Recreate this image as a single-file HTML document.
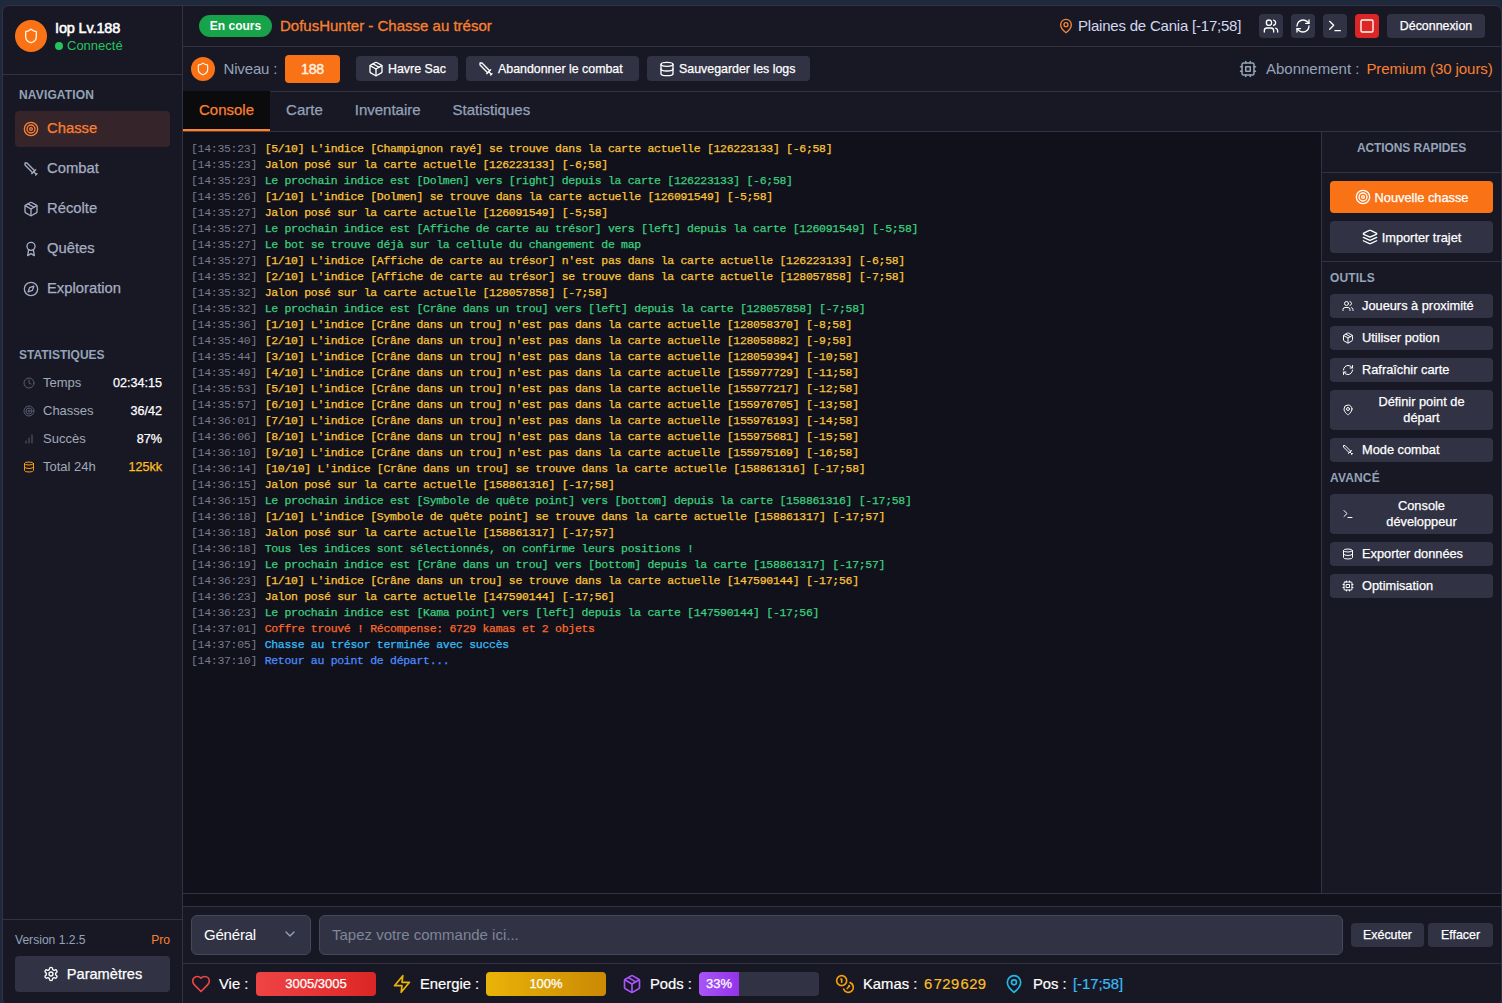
<!DOCTYPE html>
<html lang="fr">
<head>
<meta charset="utf-8">
<title>DofusHunter - Chasse au trésor</title>
<style>
*{box-sizing:border-box;margin:0;padding:0}
html,body{width:1502px;height:1003px;overflow:hidden;background:#1e293b;font-family:"Liberation Sans",Arial,sans-serif;color:#fff}
svg{display:block;fill:none;stroke:currentColor;stroke-width:2;stroke-linecap:round;stroke-linejoin:round;flex:none}
.win{position:absolute;left:2px;top:5px;width:1500px;height:1001px;border:1px solid #313244;border-radius:7px;background:#181825;overflow:hidden}
.abs{position:absolute}
/* sidebar */
.side{position:absolute;left:0;top:0;width:180px;height:998px;border-right:1px solid #313244}
.prof{position:absolute;left:0;top:0;width:179px;height:69px;border-bottom:1px solid #313244}
.ava{position:absolute;left:12px;top:14px;width:32px;height:32px;border-radius:50%;background:#f97316;color:#fff7e6;display:flex;align-items:center;justify-content:center}
.pname{position:absolute;left:52px;top:13px;font-size:14.5px;font-weight:400;-webkit-text-stroke:.55px currentColor;line-height:18px;letter-spacing:-.15px;white-space:nowrap}
.pstat{position:absolute;left:52px;top:32px;font-size:13px;line-height:16px;color:#22c55e;white-space:nowrap;display:flex;align-items:center}
.pstat i{width:8px;height:8px;border-radius:50%;background:#22c55e;margin-right:4px;display:block}
.lbl{position:absolute;font-size:12px;font-weight:700;color:#94a3b8;line-height:14px;white-space:nowrap;letter-spacing:.15px}
.nav{position:absolute;left:12px;width:155px;height:36px;border-radius:4px;display:flex;align-items:center;padding-left:8px;font-size:14.8px;color:#a6adc0;white-space:nowrap}
.nav svg{width:16px;height:16px;margin-right:8px}
.nav span{position:relative;top:-1px;-webkit-text-stroke:.25px currentColor}
.nav.on{background:#35252b;color:#fa8030}
.st{position:absolute;left:12px;width:155px;height:28px;display:flex;align-items:center;padding:0 8px;font-size:13px;color:#a1a9b8;white-space:nowrap}
.st svg{width:12px;height:12px;margin-right:8px;color:#585b70}
.st span{position:relative;top:-1px}
.st b{position:relative;top:-.3px}
.st b{margin-left:auto;color:#fff;font-weight:400;font-size:12.6px;-webkit-text-stroke:.25px currentColor}
.sfoot{position:absolute;left:0;top:913px;width:179px;height:90px;border-top:1px solid #313244}
.btn{background:#313244;border-radius:4px;color:#fff;display:flex;align-items:center;white-space:nowrap}
/* main */
.top{position:absolute;left:180px;top:0;width:1318px;height:41px;border-bottom:1px solid #313244}
.tool{position:absolute;left:180px;top:41px;width:1318px;height:45px;border-bottom:1px solid #313244}
.tabs{position:absolute;left:180px;top:85px;width:1318px;height:41px;border-bottom:1px solid #313244;display:flex}
.tab{height:40px;padding:0 16px;font-size:15px;color:#94a3b8;line-height:38px;white-space:nowrap;-webkit-text-stroke:.25px currentColor}
.tab.on{background:#0b0a0c;color:#fa8030;border-bottom:2px solid #f5853a;height:40px;box-shadow:0 1px 0 #6b3a1c}
.cons{position:absolute;left:180px;top:126px;width:1139px;height:761px;background:#11111b;border-right:1px solid #313244;font-family:"Liberation Mono","DejaVu Sans Mono",monospace;font-size:11.5px;letter-spacing:-.3px;line-height:16px;padding:9px 0 0 9px;white-space:pre;color:#6b7280}
.cons div{height:16px}
.cons span{-webkit-text-stroke:.25px currentColor}
.cons i{font-style:normal;position:relative;left:-1px;color:#777b8c}
.y{color:#fcc53a}.g{color:#3bd07f}.r{color:#fb6a2c}.c{color:#38bdf8}.b{color:#4c8dff}
.right{position:absolute;left:1319px;top:126px;width:179px;height:761px}
.band{position:absolute;left:180px;top:887px;width:1318px;height:14px;background:#11111b;border-top:1px solid #313244;border-bottom:1px solid #313244}
.cmd{position:absolute;left:180px;top:901px;width:1318px;height:57px;border-bottom:1px solid #313244}
.stat{position:absolute;left:180px;top:958px;width:1318px;height:40px;font-size:15px;white-space:nowrap}
.ver{font-size:12.1px;line-height:14px;color:#94a3b8;white-space:nowrap}
.param{font-size:14.6px;-webkit-text-stroke:.25px currentColor;padding-bottom:1px}
.pill{background:#16a34a;border-radius:11px;font-size:12px;font-weight:700;line-height:22px;text-align:center;color:#fff;white-space:nowrap}
.title{font-size:15px;line-height:18px;color:#fa8030;white-space:nowrap;-webkit-text-stroke:.3px currentColor}
.loc{display:flex;align-items:center;letter-spacing:-.21px;font-size:15px;line-height:18px;color:#d3d9ee;white-space:nowrap;height:18px}
.ib{width:24px;height:24px;justify-content:center}
.ib svg{width:16px;height:16px}
.tb{height:24px;font-size:12.4px;-webkit-text-stroke:.25px currentColor}
.tool .tb{height:25px}
.ava2{width:24px;height:24px;border-radius:50%;background:#f97316;color:#fff7e6;display:flex;align-items:center;justify-content:center}
.niv{letter-spacing:-.15px;font-size:15px;line-height:18px;color:#94a3b8;white-space:nowrap}
.badge{width:55px;height:28px;border-radius:4px;background:#f97316;font-size:14.2px;letter-spacing:-.3px;-webkit-text-stroke:.35px currentColor;color:#fff5e6;line-height:28px;text-align:center}
.abo{display:flex;align-items:center;font-size:15px;line-height:18px;color:#94a3b8;white-space:nowrap;height:18px}
.rhead{position:absolute;left:0;top:0;width:179px;height:41px;border-bottom:1px solid #313244;text-align:center;letter-spacing:-.1px;font-size:12px;font-weight:700;color:#94a3b8;line-height:32px;white-space:nowrap}
.rb{width:163px;height:32px;border-radius:4px;background:#313244;display:flex;align-items:center;justify-content:center;font-size:12.8px;-webkit-text-stroke:.25px currentColor;white-space:nowrap}
.tl{left:8px;width:163px;border-radius:4px;background:#313244;display:flex;align-items:center;padding:0 12px;font-size:12.8px;-webkit-text-stroke:.25px currentColor;line-height:16px}
.tl svg{width:12px;height:12px;margin-right:8px}
.tl span.c2{flex:1;text-align:center}
.tl br+*{}
.sel{letter-spacing:-.2px;padding-bottom:2px!important;height:40px;border:1px solid #45475a;border-radius:6px;background:#313244;display:flex;align-items:center;padding:0 12px;font-size:15px}
.inp{height:40px;border:1px solid #45475a;border-radius:6px;background:#313244;padding:0 12px;font-size:15px;line-height:38px;color:#7f8598;white-space:nowrap}
.sic{top:10px;width:20px;height:20px}
.sic svg{width:20px;height:20px}
.stx{top:11px;line-height:18px;font-size:14.8px;-webkit-text-stroke:.2px currentColor}
.kv{letter-spacing:.4px;word-spacing:-3.5px}
.bar{top:8px;width:120px;height:24px;border-radius:4px;font-size:13px;-webkit-text-stroke:.25px currentColor;line-height:24px;text-align:center;overflow:hidden}
</style>
</head>
<body>
<div class="win">
<div class="side">
<div class="prof"><div class="ava"><svg viewBox="0 0 24 24" style="width:16px;height:16px"><path d="M20 13c0 5-3.5 7.5-7.66 8.950a1 1 0 0 1-.67-.010C7.500 20.500 4 18 4 13V6a1 1 0 0 1 1-1c2 0 4.500-1.200 6.240-2.720a1.170 1.170 0 0 1 1.520 0C14.510 3.810 17 5 19 5a1 1 0 0 1 1 1z"/></svg></div><div class="pname">Iop Lv.188</div><div class="pstat"><i></i>Connecté</div></div>
<div class="lbl" style="left:16px;top:82px">NAVIGATION</div>
<div class="nav on" style="top:105px"><svg viewBox="0 0 24 24"><circle cx="12" cy="12" r="10"/><circle cx="12" cy="12" r="6"/><circle cx="12" cy="12" r="2"/></svg><span>Chasse</span></div>
<div class="nav" style="top:145px"><svg viewBox="0 0 24 24"><path d="M14.500 17.500 3 6V3h3l11.500 11.500"/><path d="m13 19 6-6"/><path d="m16 16 4 4"/><path d="m19 21 2-2"/></svg><span>Combat</span></div>
<div class="nav" style="top:185px"><svg viewBox="0 0 24 24"><path d="m7.500 4.270 9 5.150"/><path d="M21 8a2 2 0 0 0-1-1.730l-7-4a2 2 0 0 0-2 0l-7 4A2 2 0 0 0 3 8v8a2 2 0 0 0 1 1.730l7 4a2 2 0 0 0 2 0l7-4A2 2 0 0 0 21 16Z"/><path d="m3.300 7 8.700 5 8.700-5"/><path d="M12 22V12"/></svg><span>Récolte</span></div>
<div class="nav" style="top:225px"><svg viewBox="0 0 24 24"><circle cx="12" cy="8" r="6"/><path d="M15.477 12.890 17 22l-5-3-5 3 1.523-9.110"/></svg><span>Quêtes</span></div>
<div class="nav" style="top:265px"><svg viewBox="0 0 24 24"><circle cx="12" cy="12" r="10"/><path d="m16.240 7.760-2.120 6.360-6.360 2.120 2.120-6.360 6.360-2.120z"/></svg><span>Exploration</span></div>
<div class="lbl" style="left:16px;top:342px;letter-spacing:0">STATISTIQUES</div>
<div class="st" style="top:363px"><svg viewBox="0 0 24 24"><circle cx="12" cy="12" r="10"/><path d="M12 6v6l4 2"/></svg><span>Temps</span><b>02:34:15</b></div>
<div class="st" style="top:391px"><svg viewBox="0 0 24 24"><circle cx="12" cy="12" r="10"/><circle cx="12" cy="12" r="6"/><circle cx="12" cy="12" r="2"/></svg><span>Chasses</span><b>36/42</b></div>
<div class="st" style="top:419px"><svg viewBox="0 0 24 24"><path d="M12 20V10"/><path d="M18 20V4"/><path d="M6 20v-4"/></svg><span>Succès</span><b>87%</b></div>
<div class="st" style="top:447px"><svg viewBox="0 0 24 24" style="color:#f59e0b"><ellipse cx="12" cy="5" rx="9" ry="3"/><path d="M3 5v14a9 3 0 0 0 18 0V5"/><path d="M3 12a9 3 0 0 0 18 0"/></svg><span>Total 24h</span><b style="color:#fbbf24">125kk</b></div>
<div class="sfoot"><div class="abs ver" style="left:12px;top:13px">Version 1.2.5</div><div class="abs ver" style="right:12px;top:13px;color:#fa8030">Pro</div><div class="btn abs param" style="left:12px;top:36px;width:155px;height:36px;justify-content:center"><svg viewBox="0 0 24 24" style="width:16px;height:16px;margin-right:8px"><path d="M12.220 2h-.440a2 2 0 0 0-2 2v.180a2 2 0 0 1-1 1.730l-.430.250a2 2 0 0 1-2 0l-.150-.080a2 2 0 0 0-2.730.730l-.220.380a2 2 0 0 0 .730 2.730l.150.100a2 2 0 0 1 1 1.720v.510a2 2 0 0 1-1 1.740l-.150.090a2 2 0 0 0-.730 2.730l.220.380a2 2 0 0 0 2.730.730l.150-.080a2 2 0 0 1 2 0l.430.250a2 2 0 0 1 1 1.730V20a2 2 0 0 0 2 2h.440a2 2 0 0 0 2-2v-.180a2 2 0 0 1 1-1.730l.430-.250a2 2 0 0 1 2 0l.150.080a2 2 0 0 0 2.730-.730l.220-.390a2 2 0 0 0-.730-2.730l-.150-.080a2 2 0 0 1-1-1.740v-.500a2 2 0 0 1 1-1.740l.150-.090a2 2 0 0 0 .730-2.730l-.220-.380a2 2 0 0 0-2.730-.730l-.150.080a2 2 0 0 1-2 0l-.430-.250a2 2 0 0 1-1-1.730V4a2 2 0 0 0-2-2z"/><circle cx="12" cy="12" r="3"/></svg><span>Paramètres</span></div></div>
</div>
<div class="top"><div class="abs pill" style="left:16px;top:9px;width:73px;height:22px">En cours</div><div class="abs title" style="left:97px;top:11px">DofusHunter - Chasse au trésor</div><div class="abs loc" style="left:875px;top:11px"><svg viewBox="0 0 24 24" style="width:16px;height:16px;color:#f5853a;margin-right:4px"><path d="M20 10c0 6-8 12-8 12s-8-6-8-12a8 8 0 0 1 16 0Z"/><circle cx="12" cy="10" r="3"/></svg><span>Plaines de Cania [-17;58]</span></div><div class="btn abs ib" style="left:1076px;top:8px"><svg viewBox="0 0 24 24"><path d="M16 21v-2a4 4 0 0 0-4-4H6a4 4 0 0 0-4 4v2"/><circle cx="9" cy="7" r="4"/><path d="M22 21v-2a4 4 0 0 0-3-3.870"/><path d="M16 3.130a4 4 0 0 1 0 7.750"/></svg></div><div class="btn abs ib" style="left:1108px;top:8px"><svg viewBox="0 0 24 24"><path d="M3 12a9 9 0 0 1 9-9 9.750 9.750 0 0 1 6.740 2.740L21 8"/><path d="M21 3v5h-5"/><path d="M21 12a9 9 0 0 1-9 9 9.750 9.750 0 0 1-6.740-2.740L3 16"/><path d="M8 16H3v5"/></svg></div><div class="btn abs ib" style="left:1140px;top:8px"><svg viewBox="0 0 24 24"><path d="m4 17 6-6-6-6"/><path d="M12 19h8"/></svg></div><div class="btn abs ib" style="left:1172px;top:8px;background:#dc2626"><svg viewBox="0 0 24 24"><rect width="18" height="18" x="3" y="3" rx="2"/></svg></div><div class="btn abs tb" style="left:1204px;top:8px;width:98px;justify-content:center">Déconnexion</div></div>
<div class="tool"><div class="abs ava2" style="left:8px;top:10px"><svg viewBox="0 0 24 24" style="width:14px;height:14px"><path d="M20 13c0 5-3.5 7.5-7.66 8.950a1 1 0 0 1-.67-.010C7.500 20.500 4 18 4 13V6a1 1 0 0 1 1-1c2 0 4.500-1.200 6.240-2.720a1.170 1.170 0 0 1 1.520 0C14.510 3.810 17 5 19 5a1 1 0 0 1 1 1z"/></svg></div><div class="abs niv" style="left:40.5px;top:13px">Niveau :</div><div class="abs badge" style="left:102px;top:8px">188</div><div class="btn abs tb" style="left:173px;top:9px;width:102px;padding-left:12px"><svg viewBox="0 0 24 24" style="width:16px;height:16px;margin-right:4px"><path d="m7.500 4.270 9 5.150"/><path d="M21 8a2 2 0 0 0-1-1.730l-7-4a2 2 0 0 0-2 0l-7 4A2 2 0 0 0 3 8v8a2 2 0 0 0 1 1.730l7 4a2 2 0 0 0 2 0l7-4A2 2 0 0 0 21 16Z"/><path d="m3.300 7 8.700 5 8.700-5"/><path d="M12 22V12"/></svg><span>Havre Sac</span></div><div class="btn abs tb" style="left:283px;top:9px;width:173px;padding-left:12px"><svg viewBox="0 0 24 24" style="width:16px;height:16px;margin-right:4px"><path d="M14.500 17.500 3 6V3h3l11.500 11.500"/><path d="m13 19 6-6"/><path d="m16 16 4 4"/><path d="m19 21 2-2"/></svg><span>Abandonner le combat</span></div><div class="btn abs tb" style="left:464px;top:9px;width:163px;padding-left:12px"><svg viewBox="0 0 24 24" style="width:16px;height:16px;margin-right:4px"><ellipse cx="12" cy="5" rx="9" ry="3"/><path d="M3 5v14a9 3 0 0 0 18 0V5"/><path d="M3 12a9 3 0 0 0 18 0"/></svg><span>Sauvegarder les logs</span></div><div class="abs abo" style="left:1056px;top:13px"><svg viewBox="0 0 24 24" style="width:18px;height:18px;margin-right:9px"><rect x="4" y="4" width="16" height="16" rx="2"/><rect x="9" y="9" width="6" height="6"/><path d="M15 2v2M15 20v2M2 15h2M2 9h2M20 15h2M20 9h2M9 2v2M9 20v2"/></svg><span>Abonnement :</span><span style="color:#fa8030;margin-left:7px;letter-spacing:-.07px">Premium (30 jours)</span></div></div>
<div class="tabs"><div class="tab on">Console</div><div class="tab">Carte</div><div class="tab">Inventaire</div><div class="tab">Statistiques</div></div>
<div class="cons"><div><i>[14:35:23]</i> <span class="y">[5/10] L'indice [Champignon rayé] se trouve dans la carte actuelle [126223133] [-6;58]</span></div><div><i>[14:35:23]</i> <span class="y">Jalon posé sur la carte actuelle [126223133] [-6;58]</span></div><div><i>[14:35:23]</i> <span class="g">Le prochain indice est [Dolmen] vers [right] depuis la carte [126223133] [-6;58]</span></div><div><i>[14:35:26]</i> <span class="y">[1/10] L'indice [Dolmen] se trouve dans la carte actuelle [126091549] [-5;58]</span></div><div><i>[14:35:27]</i> <span class="y">Jalon posé sur la carte actuelle [126091549] [-5;58]</span></div><div><i>[14:35:27]</i> <span class="g">Le prochain indice est [Affiche de carte au trésor] vers [left] depuis la carte [126091549] [-5;58]</span></div><div><i>[14:35:27]</i> <span class="g">Le bot se trouve déjà sur la cellule du changement de map</span></div><div><i>[14:35:27]</i> <span class="y">[1/10] L'indice [Affiche de carte au trésor] n'est pas dans la carte actuelle [126223133] [-6;58]</span></div><div><i>[14:35:32]</i> <span class="y">[2/10] L'indice [Affiche de carte au trésor] se trouve dans la carte actuelle [128057858] [-7;58]</span></div><div><i>[14:35:32]</i> <span class="y">Jalon posé sur la carte actuelle [128057858] [-7;58]</span></div><div><i>[14:35:32]</i> <span class="g">Le prochain indice est [Crâne dans un trou] vers [left] depuis la carte [128057858] [-7;58]</span></div><div><i>[14:35:36]</i> <span class="y">[1/10] L'indice [Crâne dans un trou] n'est pas dans la carte actuelle [128058370] [-8;58]</span></div><div><i>[14:35:40]</i> <span class="y">[2/10] L'indice [Crâne dans un trou] n'est pas dans la carte actuelle [128058882] [-9;58]</span></div><div><i>[14:35:44]</i> <span class="y">[3/10] L'indice [Crâne dans un trou] n'est pas dans la carte actuelle [128059394] [-10;58]</span></div><div><i>[14:35:49]</i> <span class="y">[4/10] L'indice [Crâne dans un trou] n'est pas dans la carte actuelle [155977729] [-11;58]</span></div><div><i>[14:35:53]</i> <span class="y">[5/10] L'indice [Crâne dans un trou] n'est pas dans la carte actuelle [155977217] [-12;58]</span></div><div><i>[14:35:57]</i> <span class="y">[6/10] L'indice [Crâne dans un trou] n'est pas dans la carte actuelle [155976705] [-13;58]</span></div><div><i>[14:36:01]</i> <span class="y">[7/10] L'indice [Crâne dans un trou] n'est pas dans la carte actuelle [155976193] [-14;58]</span></div><div><i>[14:36:06]</i> <span class="y">[8/10] L'indice [Crâne dans un trou] n'est pas dans la carte actuelle [155975681] [-15;58]</span></div><div><i>[14:36:10]</i> <span class="y">[9/10] L'indice [Crâne dans un trou] n'est pas dans la carte actuelle [155975169] [-16;58]</span></div><div><i>[14:36:14]</i> <span class="y">[10/10] L'indice [Crâne dans un trou] se trouve dans la carte actuelle [158861316] [-17;58]</span></div><div><i>[14:36:15]</i> <span class="y">Jalon posé sur la carte actuelle [158861316] [-17;58]</span></div><div><i>[14:36:15]</i> <span class="g">Le prochain indice est [Symbole de quête point] vers [bottom] depuis la carte [158861316] [-17;58]</span></div><div><i>[14:36:18]</i> <span class="y">[1/10] L'indice [Symbole de quête point] se trouve dans la carte actuelle [158861317] [-17;57]</span></div><div><i>[14:36:18]</i> <span class="y">Jalon posé sur la carte actuelle [158861317] [-17;57]</span></div><div><i>[14:36:18]</i> <span class="g">Tous les indices sont sélectionnés, on confirme leurs positions !</span></div><div><i>[14:36:19]</i> <span class="g">Le prochain indice est [Crâne dans un trou] vers [bottom] depuis la carte [158861317] [-17;57]</span></div><div><i>[14:36:23]</i> <span class="y">[1/10] L'indice [Crâne dans un trou] se trouve dans la carte actuelle [147590144] [-17;56]</span></div><div><i>[14:36:23]</i> <span class="y">Jalon posé sur la carte actuelle [147590144] [-17;56]</span></div><div><i>[14:36:23]</i> <span class="g">Le prochain indice est [Kama point] vers [left] depuis la carte [147590144] [-17;56]</span></div><div><i>[14:37:01]</i> <span class="r">Coffre trouvé ! Récompense: 6729 kamas et 2 objets</span></div><div><i>[14:37:05]</i> <span class="c">Chasse au trésor terminée avec succès</span></div><div><i>[14:37:10]</i> <span class="b">Retour au point de départ...</span></div></div>
<div class="right"><div class="rhead">ACTIONS RAPIDES</div><div class="abs rb" style="left:8px;top:49px;background:#f97316"><svg viewBox="0 0 24 24" style="width:16px;height:16px;margin-right:4px"><circle cx="12" cy="12" r="10"/><circle cx="12" cy="12" r="6"/><circle cx="12" cy="12" r="2"/></svg><span>Nouvelle chasse</span></div><div class="abs rb" style="left:8px;top:89px"><svg viewBox="0 0 24 24" style="width:16px;height:16px;margin-right:4px"><path d="m12.830 2.180a2 2 0 0 0-1.660 0L2.600 6.080a1 1 0 0 0 0 1.830l8.580 3.910a2 2 0 0 0 1.660 0l8.580-3.900a1 1 0 0 0 0-1.830Z"/><path d="m22 17.650-9.170 4.160a2 2 0 0 1-1.660 0L2 17.650"/><path d="m22 12.650-9.170 4.160a2 2 0 0 1-1.660 0L2 12.650"/></svg><span>Importer trajet</span></div><div class="abs" style="left:0;top:129px;width:179px;height:1px;background:#313244"></div><div class="lbl" style="left:8px;top:139px">OUTILS</div><div class="abs tl" style="top:162px;height:24px"><svg viewBox="0 0 24 24"><path d="M16 21v-2a4 4 0 0 0-4-4H6a4 4 0 0 0-4 4v2"/><circle cx="9" cy="7" r="4"/><path d="M22 21v-2a4 4 0 0 0-3-3.870"/><path d="M16 3.130a4 4 0 0 1 0 7.750"/></svg><span>Joueurs à proximité</span></div><div class="abs tl" style="top:194px;height:24px"><svg viewBox="0 0 24 24"><path d="m7.500 4.270 9 5.150"/><path d="M21 8a2 2 0 0 0-1-1.730l-7-4a2 2 0 0 0-2 0l-7 4A2 2 0 0 0 3 8v8a2 2 0 0 0 1 1.730l7 4a2 2 0 0 0 2 0l7-4A2 2 0 0 0 21 16Z"/><path d="m3.300 7 8.700 5 8.700-5"/><path d="M12 22V12"/></svg><span>Utiliser potion</span></div><div class="abs tl" style="top:226px;height:24px"><svg viewBox="0 0 24 24"><path d="M3 12a9 9 0 0 1 9-9 9.750 9.750 0 0 1 6.740 2.740L21 8"/><path d="M21 3v5h-5"/><path d="M21 12a9 9 0 0 1-9 9 9.750 9.750 0 0 1-6.740-2.740L3 16"/><path d="M8 16H3v5"/></svg><span>Rafraîchir carte</span></div><div class="abs tl" style="top:258px;height:40px"><svg viewBox="0 0 24 24"><path d="M20 10c0 6-8 12-8 12s-8-6-8-12a8 8 0 0 1 16 0Z"/><circle cx="12" cy="10" r="3"/></svg><span class="c2">Définir point de<br>départ</span></div><div class="abs tl" style="top:306px;height:24px"><svg viewBox="0 0 24 24"><path d="M14.500 17.500 3 6V3h3l11.500 11.500"/><path d="m13 19 6-6"/><path d="m16 16 4 4"/><path d="m19 21 2-2"/></svg><span>Mode combat</span></div><div class="lbl" style="left:8px;top:339px">AVANCÉ</div><div class="abs tl" style="top:362px;height:40px"><svg viewBox="0 0 24 24"><path d="m4 17 6-6-6-6"/><path d="M12 19h8"/></svg><span class="c2">Console<br>développeur</span></div><div class="abs tl" style="top:410px;height:24px"><svg viewBox="0 0 24 24"><ellipse cx="12" cy="5" rx="9" ry="3"/><path d="M3 5v14a9 3 0 0 0 18 0V5"/><path d="M3 12a9 3 0 0 0 18 0"/></svg><span>Exporter données</span></div><div class="abs tl" style="top:442px;height:24px"><svg viewBox="0 0 24 24"><rect x="4" y="4" width="16" height="16" rx="2"/><rect x="9" y="9" width="6" height="6"/><path d="M15 2v2M15 20v2M2 15h2M2 9h2M20 15h2M20 9h2M9 2v2M9 20v2"/></svg><span>Optimisation</span></div></div>
<div class="band"></div>
<div class="cmd"><div class="abs sel" style="left:8px;top:8px;width:120px"><span>Général</span><svg viewBox="0 0 24 24" style="width:16px;height:16px;color:#94a3b8;margin-left:auto"><path d="m6 9 6 6 6-6"/></svg></div><div class="abs inp" style="left:136px;top:8px;width:1024px">Tapez votre commande ici...</div><div class="btn abs tb" style="left:1168px;top:16px;width:73px;justify-content:center">Exécuter</div><div class="btn abs tb" style="left:1245px;top:16px;width:65px;justify-content:center">Effacer</div></div>
<div class="stat"><div class="abs sic" style="left:8px;color:#ef4444"><svg viewBox="0 0 24 24"><path d="M19 14c1.490-1.460 3-3.210 3-5.500A5.500 5.500 0 0 0 16.500 3c-1.760 0-3 .500-4.500 2-1.500-1.500-2.740-2-4.500-2A5.500 5.500 0 0 0 2 8.500c0 2.300 1.500 4.050 3 5.500l7 7Z"/></svg></div><div class="abs stx" style="left:36px">Vie :</div><div class="abs bar" style="left:73px;background:linear-gradient(90deg,#ef4444,#dc2626)">3005/3005</div><div class="abs sic" style="left:209px;color:#eab308"><svg viewBox="0 0 24 24"><path d="M13 2 3 14h9l-1 8 10-12h-9l1-8z"/></svg></div><div class="abs stx" style="left:237px">Energie :</div><div class="abs bar" style="left:303px;background:linear-gradient(90deg,#eab308,#ca8a04)">100%</div><div class="abs sic" style="left:439px;color:#a855f7"><svg viewBox="0 0 24 24"><path d="m7.500 4.270 9 5.150"/><path d="M21 8a2 2 0 0 0-1-1.730l-7-4a2 2 0 0 0-2 0l-7 4A2 2 0 0 0 3 8v8a2 2 0 0 0 1 1.730l7 4a2 2 0 0 0 2 0l7-4A2 2 0 0 0 21 16Z"/><path d="m3.300 7 8.700 5 8.700-5"/><path d="M12 22V12"/></svg></div><div class="abs stx" style="left:467px">Pods :</div><div class="abs bar" style="left:516px;background:#313244"><div class="abs" style="left:0;top:0;width:40px;height:24px;background:linear-gradient(90deg,#a855f7,#9333ea);border-radius:4px 0 0 4px;line-height:24px;text-align:center">33%</div></div><div class="abs sic" style="left:652px;color:#f59e0b"><svg viewBox="0 0 24 24"><circle cx="8" cy="8" r="6"/><path d="M18.090 10.370A6 6 0 1 1 10.340 18"/><path d="M7 6h1v4"/><path d="m16.710 13.880.700.710-2.820 2.820"/></svg></div><div class="abs stx" style="left:680px">Kamas :</div><div class="abs stx kv" style="left:741px;color:#fbbf24">6 729 629</div><div class="abs sic" style="left:821px;color:#22b8e6"><svg viewBox="0 0 24 24"><path d="M20 10c0 6-8 12-8 12s-8-6-8-12a8 8 0 0 1 16 0Z"/><circle cx="12" cy="10" r="3"/></svg></div><div class="abs stx" style="left:850px">Pos :</div><div class="abs stx" style="left:890px;color:#38bdf8">[-17;58]</div></div>
</div>
</body>
</html>
